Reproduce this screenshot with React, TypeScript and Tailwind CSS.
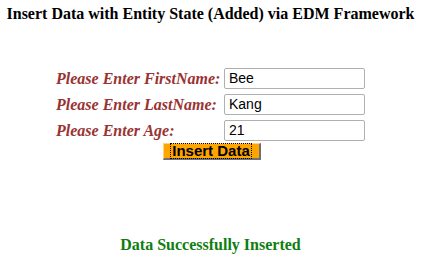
export default function App() {
  const rows = [
    { label: "Please Enter FirstName:", value: "Bee" },
    { label: "Please Enter LastName:", value: "Kang" },
    { label: "Please Enter Age:", value: "21" },
  ];
  return (
    <div className="w-[421px] h-[257px] bg-white font-['Liberation_Serif',serif] flex flex-col items-center whitespace-nowrap">
      <h3 className="mt-[4px] text-[16px] font-bold text-black leading-5">
        Insert Data with Entity State (Added) via EDM Framework
      </h3>
      <div className="mt-[44px] flex flex-col gap-[5px]">
        {rows.map((r) => (
          <div key={r.label} className="flex items-center gap-[5px]">
            <span className="w-[163px] text-[16px] font-bold italic text-[#993333] leading-5">
              {r.label}
            </span>
            <input
              readOnly
              value={r.value}
              className="w-[141px] h-[21px] border border-[#b0b0b0] rounded-[2px] px-[4px] text-[14px] text-black font-['Liberation_Sans',sans-serif] outline-none"
            />
          </div>
        ))}
      </div>
      <button className="mt-[2px] ml-[2px] w-[98px] h-[17px] bg-[#ffa500] border-t border-l border-t-[#ffd27f] border-l-[#ffd27f] border-r-2 border-b-2 border-r-[#707070] border-b-[#707070] flex items-center justify-center">
        <span className="outline outline-1 outline-dotted outline-black px-[1px] leading-[14px] text-[15px] font-bold font-['Liberation_Sans',sans-serif] text-black">
          Insert Data
        </span>
      </button>
      <div className="mt-[75px] text-[16px] font-bold text-[#0f7d0f] leading-5">
        Data Successfully Inserted
      </div>
    </div>
  );
}
